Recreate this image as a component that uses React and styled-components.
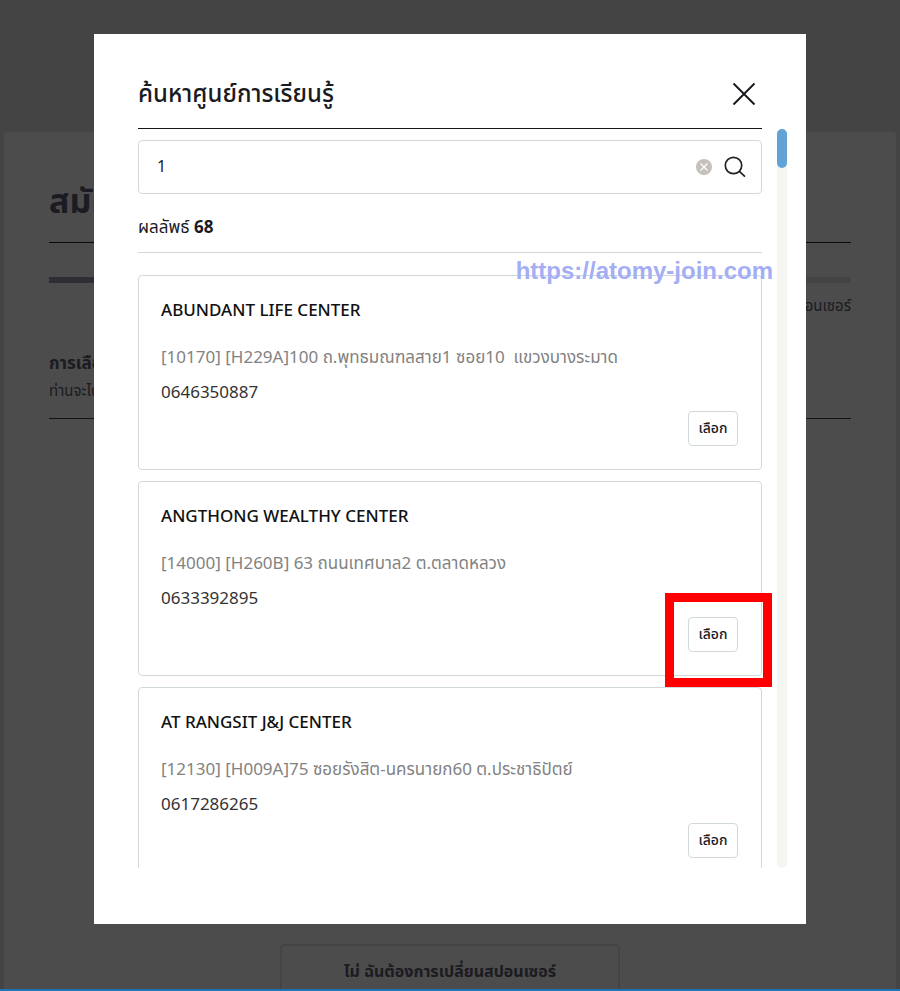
import React, { useState } from "react";
import styled, { createGlobalStyle } from "styled-components";

const GlobalStyle = createGlobalStyle`
  *, *::before, *::after { box-sizing: border-box; }
  body {
    margin: 0;
    background: #e3e3e3;
    color: #1a1a1f;
    font-family: "Noto Sans", "Noto Sans Thai", "Open Sans", sans-serif;
    font-size: 17px;
  }
  h1, h2, h3, p, ul { margin: 0; padding: 0; }
  button, input { font: inherit; color: inherit; }
`;

const Page = styled.div`
  height: 100vh;
  padding: 132px 4px 0;
  overflow: hidden;
`;

const Sheet = styled.main`
  display: flex;
  flex-direction: column;
  height: 100%;
  padding: 42px 45px 0;
  background: #fff;
  border-radius: 4px;
  color: #5e5a6e;
`;

const PageTitle = styled.h1`
  height: 69px;
  font-size: 34px;
  line-height: 52px;
  border-bottom: 1px solid #222;
`;

const Progress = styled.div`
  height: 6px;
  margin-top: 34px;
  background: #e4e4e4;
`;

const ProgressFill = styled.div`
  width: 33%;
  height: 100%;
  background: #9c9cae;
`;

const StepLabel = styled.p`
  margin-top: 8px;
  font-size: 15px;
  line-height: 28px;
  text-align: right;
`;

const SectionTitle = styled.h2`
  margin-top: 30px;
  font-size: 17px;
  line-height: 28px;
`;

const SectionNote = styled.p`
  height: 42px;
  font-size: 15px;
  line-height: 26px;
  border-bottom: 1px solid #444;
`;

const DeclineButton = styled.button`
  align-self: center;
  flex: none;
  width: 340px;
  height: 47px;
  margin-top: auto;
  padding: 6px 0 0;
  border: 2px solid #e3e3e3;
  border-bottom: 0;
  border-radius: 4px 4px 0 0;
  background: none;
  font-size: 16px;
  font-weight: 700;
`;

const Overlay = styled.div`
  position: fixed;
  inset: 0;
  display: flex;
  padding: 34px 94px 65px;
  background: rgba(0, 0, 0, 0.7);
  border-bottom: 2px solid #1f74b1;
`;

const Dialog = styled.section`
  position: relative;
  display: flex;
  flex-direction: column;
  flex: 1;
  min-width: 0;
  padding: 34px 19px 56px 44px;
  background: #fff;
`;

const DialogHeader = styled.header`
  display: flex;
  justify-content: space-between;
  flex: none;
  height: 61px;
  margin-right: 25px;
  padding-top: 8px;
  border-bottom: 1px solid #15151a;
`;

const DialogTitle = styled.h2`
  font-size: 24px;
  font-weight: 500;
  line-height: 34px;
`;

const IconButton = styled.button`
  display: grid;
  place-items: center;
  width: ${(p) => p.$size}px;
  height: ${(p) => p.$size}px;
  padding: 0;
  border: 0;
  background: none;
  cursor: pointer;
`;

const DialogBody = styled.div`
  display: grid;
  grid-template-columns: minmax(0, 1fr) 10px;
  gap: 15px;
  flex: 1;
  min-height: 0;
  overflow: hidden;
`;

const Content = styled.div`
  min-height: 0;
  padding-top: 11px;
`;

const Track = styled.div`
  border-radius: 5px;
  background: #f5f6f1;
`;

const Thumb = styled.div`
  height: 39px;
  border-radius: 5px;
  background: #61a3d6;
`;

const SearchBox = styled.form`
  display: flex;
  align-items: center;
  gap: 3px;
  height: 54px;
  padding: 0 10px 0 18px;
  border: 1px solid #d2d9dc;
  border-radius: 4px;
`;

const SearchInput = styled.input`
  flex: 1;
  min-width: 0;
  padding: 0 0 2px;
  border: 0;
  outline: 0;
  font-size: 16px;
  background: none;
`;

const ResultCount = styled.p`
  height: 59px;
  padding-top: 19px;
  font-size: 17px;
  line-height: 28px;
  border-bottom: 1px solid #d2d9dc;
`;

const CenterList = styled.ul`
  display: grid;
  gap: 11px;
  margin-top: 22px;
  list-style: none;
`;

const Card = styled.li`
  display: flex;
  flex-direction: column;
  padding: 22px 23px 23px 22px;
  border: 1px solid #d2d9dc;
  border-radius: 4px;
  line-height: 28px;
`;

const CardTitle = styled.h3`
  margin-bottom: 21px;
  font-size: 17px;
  font-weight: 500;
  line-height: 24px;
  color: #111;
`;

const Address = styled.p`
  margin-bottom: 7px;
  color: #828282;
  white-space: pre-wrap;
`;

const Phone = styled.p`
  margin-bottom: 5px;
  color: #333;
`;

const SelectSlot = styled.div`
  position: relative;
  align-self: flex-end;
`;

const SelectButton = styled.button`
  display: block;
  width: 50px;
  height: 35px;
  padding: 0 0 2px;
  border: 1px solid #d2d9dc;
  border-radius: 4px;
  background: #fff;
  font-size: 14px;
  font-weight: 500;
  cursor: pointer;
`;

const Highlight = styled.div`
  position: absolute;
  z-index: 1;
  inset: -24px -34px -35px -23px;
  border: 9px solid #f00;
  pointer-events: none;
`;

const Watermark = styled.a`
  position: absolute;
  top: 224px;
  right: 33px;
  font-family: "Liberation Sans", Arial, sans-serif;
  font-size: 24px;
  font-weight: 700;
  line-height: 26px;
  color: #a3aef4;
  text-decoration: none;
`;

const centers = [
  { name: "ABUNDANT LIFE CENTER", address: "[10170] [H229A]100 ถ.พุทธมณฑลสาย1 ซอย10  แขวงบางระมาด", phone: "0646350887" },
  { name: "ANGTHONG WEALTHY CENTER", address: "[14000] [H260B] 63 ถนนเทศบาล2 ต.ตลาดหลวง", phone: "0633392895", highlighted: true },
  { name: "AT RANGSIT J&J CENTER", address: "[12130] [H009A]75 ซอยรังสิต-นครนายก60 ต.ประชาธิปัตย์", phone: "0617286265" },
];

const CloseIcon = () => (
  <svg width="24" height="24" viewBox="0 0 24 24" fill="none" stroke="#15151a" strokeWidth="1.8" aria-hidden="true">
    <path d="M1.5 1.5 22.5 22.5M22.5 1.5 1.5 22.5" />
  </svg>
);

const ClearIcon = () => (
  <svg width="18" height="18" viewBox="0 0 18 18" aria-hidden="true">
    <circle cx="9" cy="9" r="8" fill="#c4c1bd" />
    <path d="m5.5 5.5 7 7m0-7-7 7" stroke="#fff" strokeWidth="1.3" />
  </svg>
);

const SearchIcon = () => (
  <svg width="22" height="22" viewBox="0 0 22 22" fill="none" stroke="#222" strokeWidth="1.7" aria-hidden="true">
    <circle cx="9.5" cy="9.5" r="8.2" />
    <path d="m15.4 15.4 5.6 5.2" />
  </svg>
);

export default function App() {
  const [query, setQuery] = useState("1");
  return (
    <>
      <GlobalStyle />
      <Page>
        <Sheet>
          <PageTitle>สมัคร</PageTitle>
          <Progress><ProgressFill /></Progress>
          <StepLabel>สปอนเซอร์</StepLabel>
          <SectionTitle>การเลือก</SectionTitle>
          <SectionNote>ท่านจะได้</SectionNote>
          <DeclineButton type="button">ไม่ ฉันต้องการเปลี่ยนสปอนเซอร์</DeclineButton>
        </Sheet>
      </Page>
      <Overlay>
        <Dialog role="dialog" aria-modal="true" aria-labelledby="dialog-title">
          <DialogHeader>
            <DialogTitle id="dialog-title">ค้นหาศูนย์การเรียนรู้</DialogTitle>
            <IconButton $size={36} type="button" aria-label="ปิด"><CloseIcon /></IconButton>
          </DialogHeader>
          <DialogBody>
            <Content>
              <SearchBox onSubmit={(e) => e.preventDefault()}>
                <SearchInput aria-label="ค้นหาศูนย์การเรียนรู้" value={query} onChange={(e) => setQuery(e.target.value)} />
                <IconButton $size={24} type="button" aria-label="ล้าง" onClick={() => setQuery("")}><ClearIcon /></IconButton>
                <IconButton $size={32} type="submit" aria-label="ค้นหา"><SearchIcon /></IconButton>
              </SearchBox>
              <ResultCount>ผลลัพธ์ <strong>68</strong></ResultCount>
              <CenterList>
                {centers.map((c) => (
                  <Card key={c.name}>
                    <CardTitle>{c.name}</CardTitle>
                    <Address>{c.address}</Address>
                    <Phone>{c.phone}</Phone>
                    <SelectSlot>
                      <SelectButton type="button">เลือก</SelectButton>
                      {c.highlighted && <Highlight />}
                    </SelectSlot>
                  </Card>
                ))}
              </CenterList>
            </Content>
            <Track><Thumb /></Track>
          </DialogBody>
          <Watermark href="https://atomy-join.com">https://atomy-join.com</Watermark>
        </Dialog>
      </Overlay>
    </>
  );
}
